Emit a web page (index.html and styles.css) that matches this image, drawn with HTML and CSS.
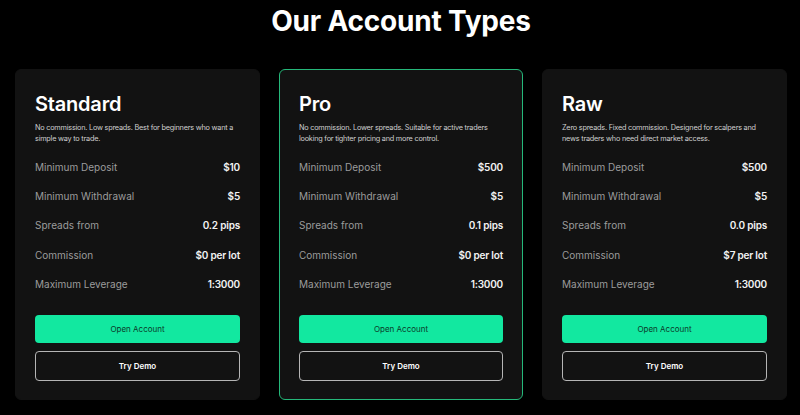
FILE: index.html
```html
<!DOCTYPE html>
<html lang="en">
<head>
<meta charset="utf-8">
<title>Our Account Types</title>
<link rel="stylesheet" href="styles.css">
</head>
<body>
<section class="accounts">
  <h1 class="heading">Our Account Types</h1>
  <div class="cards">
    <article class="card">
      <h2 class="card-title">Standard</h2>
      <p class="card-desc">No commission. Low spreads. Best for beginners who want a simple way to trade.</p>
      <ul class="specs">
        <li class="spec"><span class="label">Minimum Deposit</span><span class="value">$10</span></li>
        <li class="spec"><span class="label">Minimum Withdrawal</span><span class="value">$5</span></li>
        <li class="spec"><span class="label">Spreads from</span><span class="value">0.2 pips</span></li>
        <li class="spec"><span class="label">Commission</span><span class="value">$0 per lot</span></li>
        <li class="spec"><span class="label">Maximum Leverage</span><span class="value">1:3000</span></li>
      </ul>
      <div class="actions">
        <a class="btn btn-primary" href="#">Open Account</a>
        <a class="btn btn-outline" href="#">Try Demo</a>
      </div>
    </article>
    <article class="card card-featured">
      <h2 class="card-title">Pro</h2>
      <p class="card-desc">No commission. Lower spreads. Suitable for active traders looking for tighter pricing and more control.</p>
      <ul class="specs">
        <li class="spec"><span class="label">Minimum Deposit</span><span class="value">$500</span></li>
        <li class="spec"><span class="label">Minimum Withdrawal</span><span class="value">$5</span></li>
        <li class="spec"><span class="label">Spreads from</span><span class="value">0.1 pips</span></li>
        <li class="spec"><span class="label">Commission</span><span class="value">$0 per lot</span></li>
        <li class="spec"><span class="label">Maximum Leverage</span><span class="value">1:3000</span></li>
      </ul>
      <div class="actions">
        <a class="btn btn-primary" href="#">Open Account</a>
        <a class="btn btn-outline" href="#">Try Demo</a>
      </div>
    </article>
    <article class="card">
      <h2 class="card-title">Raw</h2>
      <p class="card-desc">Zero spreads. Fixed commission. Designed for scalpers and news traders who need direct market access.</p>
      <ul class="specs">
        <li class="spec"><span class="label">Minimum Deposit</span><span class="value">$500</span></li>
        <li class="spec"><span class="label">Minimum Withdrawal</span><span class="value">$5</span></li>
        <li class="spec"><span class="label">Spreads from</span><span class="value">0.0 pips</span></li>
        <li class="spec"><span class="label">Commission</span><span class="value">$7 per lot</span></li>
        <li class="spec"><span class="label">Maximum Leverage</span><span class="value">1:3000</span></li>
      </ul>
      <div class="actions">
        <a class="btn btn-primary" href="#">Open Account</a>
        <a class="btn btn-outline" href="#">Try Demo</a>
      </div>
    </article>
  </div>
</section>
</body>
</html>
```

FILE: styles.css
```css
* { box-sizing: border-box; }
html, body {
  margin: 0;
  padding: 0;
  background: #000;
  color: #fff;
  font-family: Inter, "Noto Sans", "Liberation Sans", sans-serif;
  overflow: hidden;
}
.accounts {
  padding: 0 13px 0 15px;
}
.heading {
  margin: 0;
  height: 69px;
  padding-top: 3px;
  text-align: center;
  font-size: 28px;
  line-height: 36px;
  font-weight: 700;
  letter-spacing: -0.2px;
}
.cards {
  display: grid;
  grid-template-columns: 245px 244px 245px;
  column-gap: 19px;
}
.card {
  background: #121212;
  border: 1px solid #121212;
  border-radius: 6px;
  padding: 21px 19px 18px;
  height: 331px;
  display: flex;
  flex-direction: column;
}
.card-featured {
  border-color: #25b87a;
}
.card-title {
  margin: 0;
  font-size: 20px;
  line-height: 26px;
  font-weight: 600;
  letter-spacing: -0.2px;
}
.card-desc {
  margin: 5px 0 0;
  font-size: 7.3px;
  line-height: 11px;
  letter-spacing: -0.22px;
  color: #cfcfcf;
  height: 22px;
}
.specs {
  list-style: none;
  margin: 8px 0 0;
  padding: 0;
}
.spec {
  display: flex;
  justify-content: space-between;
  align-items: center;
  height: 29.3px;
  font-size: 10px;
}
.label {
  color: #9c9c9c;
}
.value {
  color: #f2f2f2;
  font-weight: 600;
  letter-spacing: -0.2px;
}
.actions {
  margin-top: auto;
  display: flex;
  flex-direction: column;
  gap: 8px;
}
.btn {
  display: flex;
  align-items: center;
  justify-content: center;
  text-decoration: none;
  font-size: 8px;
  border-radius: 4px;
}
.btn-primary {
  height: 28px;
  background: #12e8a0;
  color: #0b3b2a;
}
.btn-outline {
  height: 30px;
  border: 1px solid #b5b5b5;
  color: #fff;
  font-weight: 600;
}
```
